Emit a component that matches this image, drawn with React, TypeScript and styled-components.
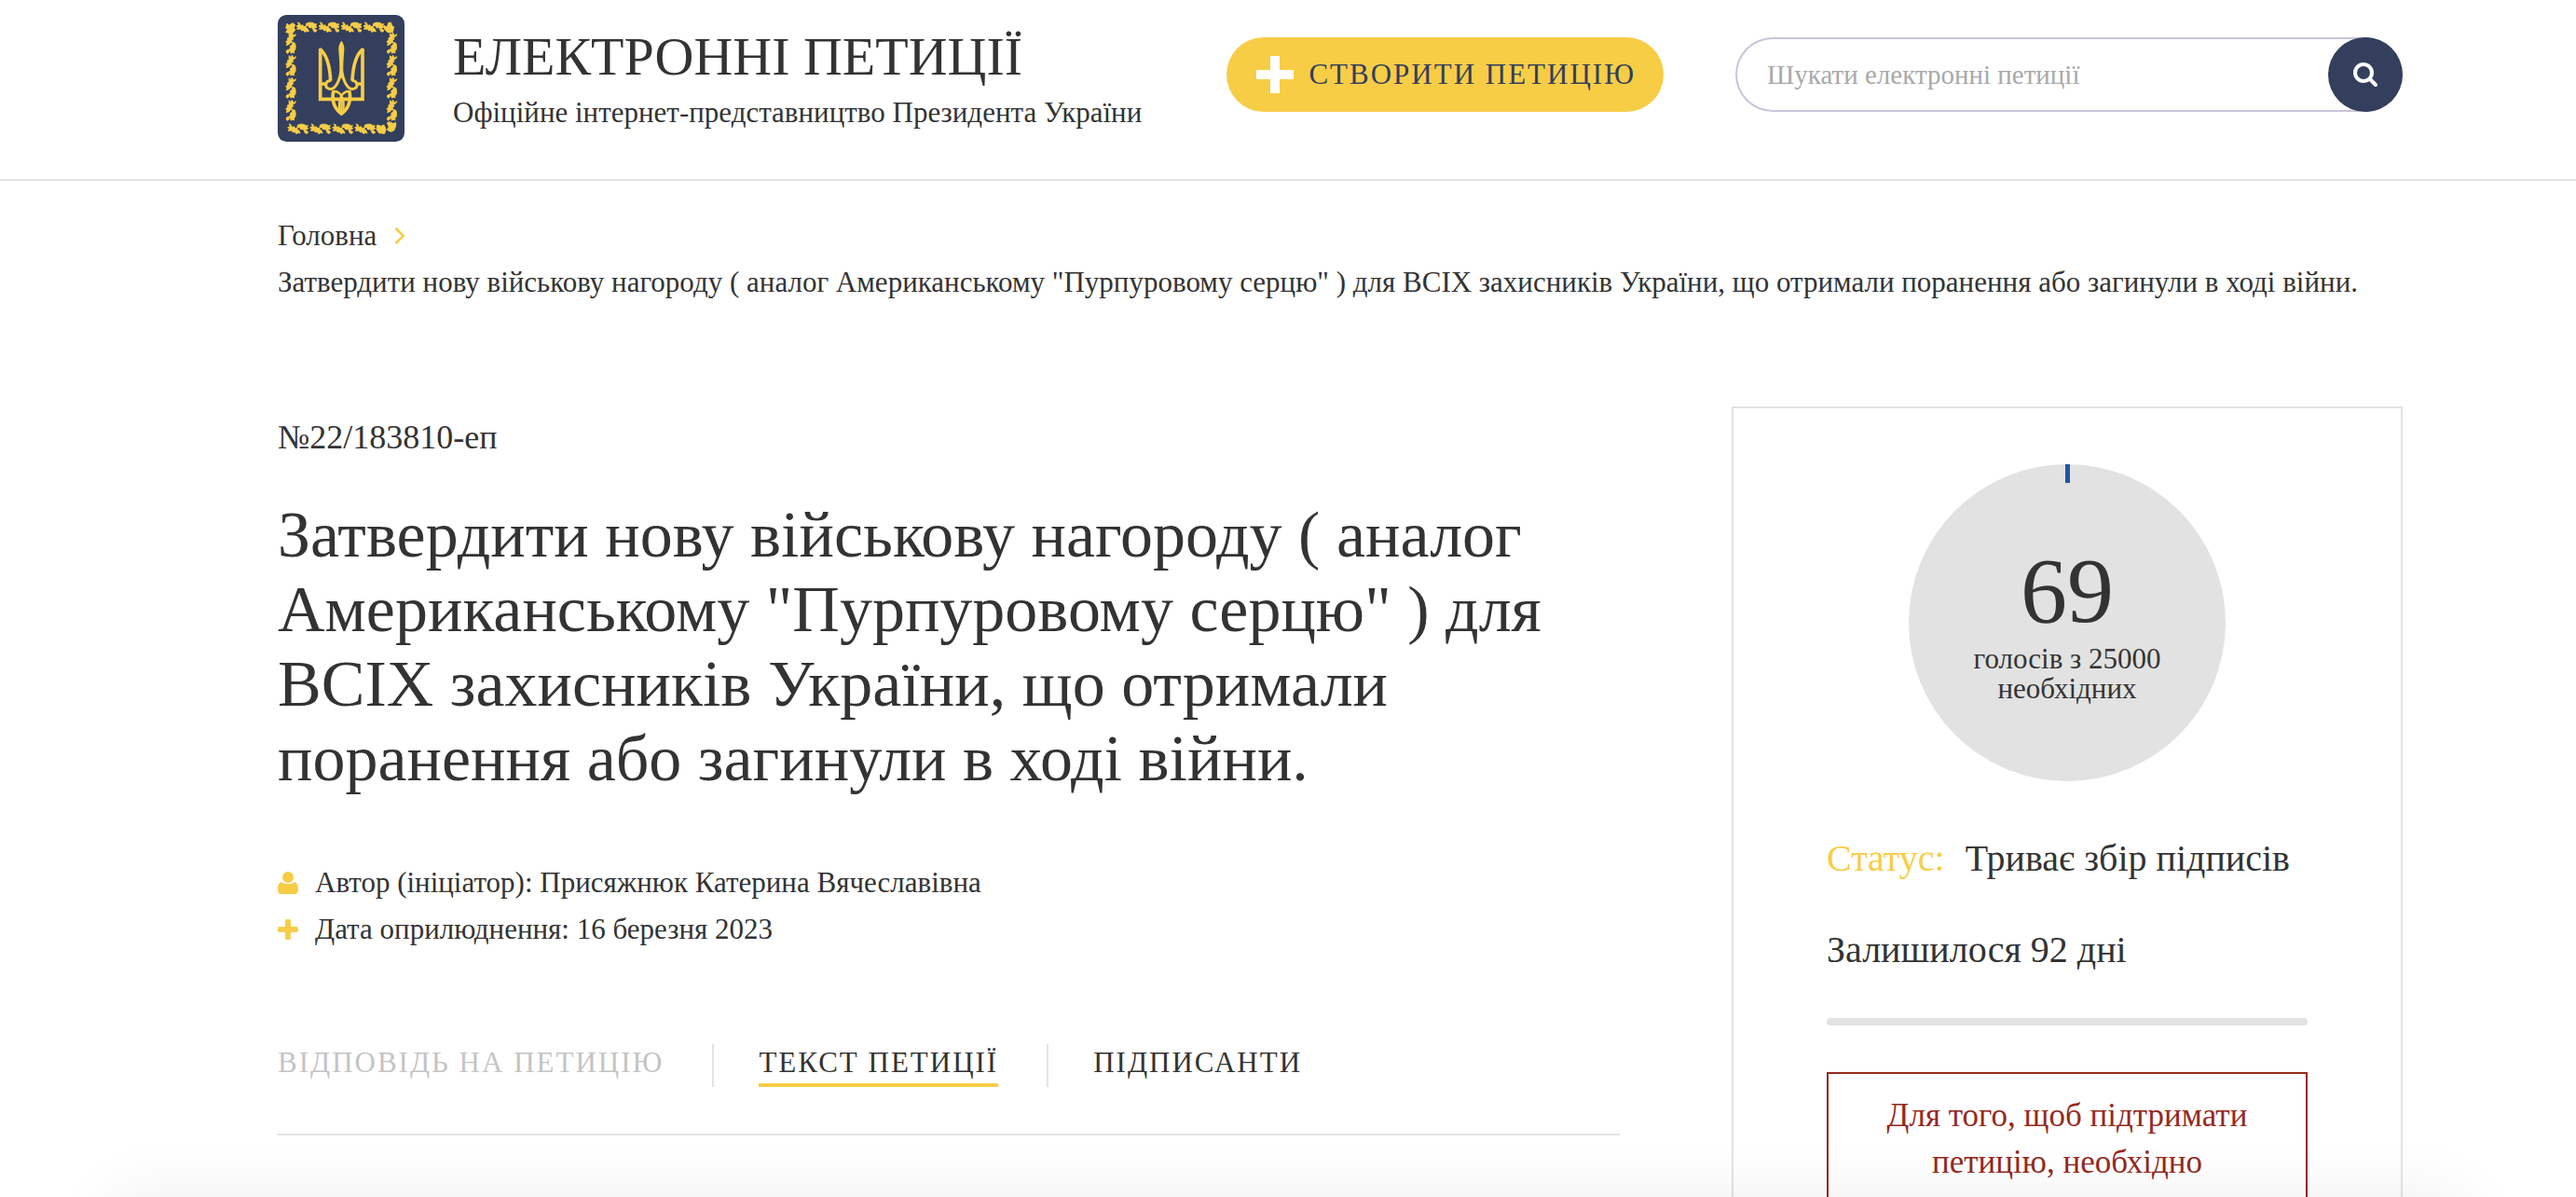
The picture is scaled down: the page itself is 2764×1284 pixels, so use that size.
import React from 'react';
import styled, { createGlobalStyle } from 'styled-components';
import { ChevronRight } from 'lucide-react';

const color = {
  text: '#333333',
  muted: '#c4c4c4',
  line: '#e3e3e3',
  navy: '#333f5d',
  yellow: '#f7cd46',
  red: '#942a1e',
};

const GlobalStyle = createGlobalStyle`
  *, *::before, *::after { box-sizing: border-box; }
  body {
    margin: 0;
    background: #ffffff;
    color: ${color.text};
    font-family: Georgia, "Liberation Serif", serif;
    font-size: 31px;
    line-height: 50px;
  }
  a { color: inherit; text-decoration: none; }
  button, input { font: inherit; }
`;

const Page = styled.div`
  display: flex;
  flex-direction: column;
  height: 100vh;
  overflow: hidden;
`;

const Header = styled.header`
  display: flex;
  align-items: flex-start;
  padding: 16px 186px 40px 298px;
  border-bottom: 2px solid ${color.line};
`;

const Brand = styled.a`
  display: flex;
  gap: 52px;
`;

const BrandText = styled.div`
  display: flex;
  flex-direction: column;
  gap: 8px;
  padding-top: 13px;
  white-space: nowrap;
`;

const BrandTitle = styled.span`
  font-size: 58px;
  line-height: 64px;
`;

const BrandNote = styled.span`
  line-height: 40px;
`;

const Tools = styled.div`
  display: flex;
  flex: 1;
  justify-content: flex-end;
  gap: 77px;
  padding-top: 24px;
`;

const CreateButton = styled.button`
  display: flex;
  align-items: center;
  gap: 16px;
  height: 80px;
  padding: 0 30px 0 32px;
  border: 0;
  border-radius: 40px;
  background: ${color.yellow};
  color: ${color.navy};
  letter-spacing: 2px;
  white-space: nowrap;
`;

const SearchForm = styled.form`
  display: flex;
  width: 716px;
  height: 80px;
  border-radius: 40px;
  box-shadow: inset 0 0 0 2px #c8c5d8;
`;

const SearchInput = styled.input`
  flex: 1;
  min-width: 0;
  padding: 0 34px;
  border: 0;
  outline: 0;
  background: transparent;
  color: ${color.text};
  font-size: 29px;
  &::placeholder { color: #a9a9a9; opacity: 1; }
`;

const SearchButton = styled.button`
  display: flex;
  align-items: center;
  justify-content: center;
  width: 80px;
  height: 80px;
  padding: 0;
  border: 0;
  border-radius: 50%;
  background: ${color.navy};
`;

const Content = styled.main`
  display: flex;
  flex: 1;
  flex-direction: column;
  gap: 108px;
  padding: 34px 186px 0 298px;
`;

const Breadcrumbs = styled.nav`
  display: flex;
  flex-direction: column;
`;

const Crumb = styled.span`
  display: flex;
  align-items: center;
  gap: 10px;
`;

const Columns = styled.div`
  display: grid;
  flex: 1;
  grid-template-columns: 2fr 1fr;
  gap: 120px;
`;

const Petition = styled.article`
  padding-top: 8px;
`;

const PetitionNumber = styled.div`
  font-size: 36px;
`;

const Title = styled.h1`
  margin: 40px 0 68px;
  font-size: 70px;
  font-weight: 400;
  line-height: 80px;
`;

const Meta = styled.div`
  display: flex;
  align-items: center;
  gap: 18px;
`;

const Tabs = styled.nav`
  display: flex;
  margin-top: 98px;
  padding-bottom: 50px;
  border-bottom: 2px solid ${color.line};
`;

const TabCell = styled.div`
  display: flex;
  & + & {
    margin-left: 52px;
    padding-left: 48px;
    border-left: 2px solid ${color.line};
  }
`;

const Tab = styled.a<{ $active?: boolean; $disabled?: boolean }>`
  padding-bottom: 2px;
  border-bottom: 4px solid ${p => (p.$active ? color.yellow : 'transparent')};
  color: ${p => (p.$disabled ? color.muted : color.text)};
  line-height: 40px;
  letter-spacing: 2px;
`;

const Card = styled.aside`
  display: flex;
  flex-direction: column;
  padding: 60px 100px 0;
  border: 2px solid ${color.line};
  border-bottom: 0;
`;

const Votes = styled.div`
  display: flex;
  flex-direction: column;
  align-items: center;
  align-self: center;
  width: 340px;
  height: 340px;
  border-radius: 50%;
  background: #e2e2e2;
  text-align: center;
`;

const VoteTick = styled.span`
  width: 5px;
  height: 20px;
  background: #2454a0;
`;

const VoteCount = styled.strong`
  margin: 66px 0 7px;
  font-size: 100px;
  font-weight: 400;
  line-height: 100px;
`;

const VoteGoal = styled.span`
  width: 240px;
  line-height: 32px;
`;

const Status = styled.div`
  display: flex;
  gap: 22px;
  margin: 58px 0 48px;
  font-size: 40px;
  white-space: nowrap;
`;

const StatusLabel = styled.span`
  color: ${color.yellow};
`;

const DaysLeft = styled.div`
  font-size: 40px;
`;

const DaysBar = styled.div`
  flex: none;
  height: 8px;
  margin: 48px 0 50px;
  border-radius: 4px;
  background: ${color.line};
`;

const Notice = styled.div`
  flex: 1;
  padding: 20px 50px 0;
  border: 2px solid ${color.red};
  border-bottom: 0;
  color: ${color.red};
  font-size: 35px;
  text-align: center;
`;

const BottomShade = styled.div`
  position: fixed;
  top: 100%;
  right: 120px;
  left: 120px;
  height: 80px;
  box-shadow: 0 0 70px rgba(0, 0, 0, 0.07);
`;

const GARLAND =
  'M4 0L9 7L0 12L7 16L1 21L9 22L14 20L16 26L24 26L28 32L33 28L40 30L36 20L30 17L32 12L24 14L20 8L14 11L10 2Z' +
  'M32 4C38 -1 55 -1 59 6L65 5L62 11L66 15L58 18L54 23L49 16L43 18L38 11L31 10Z' +
  'M54 24L60 21L66 26L62 31L56 29Z';

function Emblem() {
  const steps = [0, 1, 2, 3];
  return (
    <svg width="136" height="136" viewBox="24 18 408 408" role="img" aria-label="Герб України">
      <rect x="24" y="18" width="408" height="408" rx="28" fill={color.navy} />
      <g fill={color.yellow} stroke={color.yellow} strokeWidth="3" strokeLinejoin="round">
        {steps.map(i => (
          <g key={i}>
            <path d={GARLAND} transform={`translate(${84 + i * 72} 42)`} />
            <path d={GARLAND} transform={`translate(${56 + i * 72} 369)`} />
            <path d={GARLAND} transform={`translate(82 ${76 + i * 72}) rotate(90)`} />
            <path d={GARLAND} transform={`translate(407 ${76 + i * 72}) rotate(90)`} />
          </g>
        ))}
        <path d="M54 46L60 52L72 44L80 50L76 60L80 66L66 84L60 76L50 74L56 64L50 60Z" />
        <path d="M366 52L376 58L380 44L388 42L392 54L398 56L394 74L378 74L368 64Z" />
        <path d="M344 372L356 376L366 372L372 386L368 400L350 398L342 386Z" />
        <path d="M376 366L384 362L396 368L404 364L404 376L398 390L388 394L376 388L382 378Z" />
      </g>
      <path
        d="M229 101C222 110 219 119 220 132C223 168 224 192 222 206L229 224L236 206C234 192 235 168 238 132C239 119 236 110 229 101Z"
        fill={color.yellow}
      />
      <g fill="none" stroke={color.yellow} strokeWidth="11">
        <path d="M161 126V289H297V126" />
        <path d="M159 127C183 146 192 184 194 230M299 127C275 146 266 184 264 230" />
        <path d="M196 229C177 230 174 249 187 255C203 262 219 244 227 204M262 229C281 230 284 249 271 255C255 262 239 244 231 204" strokeWidth="9" />
        <path d="M161 240H180M297 240H278" />
        <path d="M204 262C196 292 206 320 229 336C252 320 262 292 254 262" />
        <path d="M203 264C226 262 240 286 235 326M255 264C232 262 218 286 223 326" strokeWidth="7" />
        <path d="M229 288V334" strokeWidth="7" />
      </g>
    </svg>
  );
}

const CreateIcon = () => (
  <svg width="40" height="40" viewBox="0 0 40 40" aria-hidden="true">
    <path d="M15 0H25V15H40V25H25V40H15V25H0V15H15Z" fill="#ffffff" />
  </svg>
);

const SearchIcon = () => (
  <svg width="26" height="26" viewBox="0 0 26 26" fill="none" stroke="#ffffff" aria-hidden="true">
    <circle cx="11" cy="11" r="9" strokeWidth="4" />
    <path d="M18 18L24 24" strokeWidth="4" strokeLinecap="round" />
  </svg>
);

const AuthorIcon = () => (
  <svg width="22" height="24" viewBox="0 0 22 24" fill={color.yellow} aria-hidden="true">
    <circle cx="11" cy="6" r="6" />
    <path d="M4 11C6 14 16 14 18 11C21 12 22 15 22 19C22 22 21 24 18 24H4C1 24 0 22 0 19C0 15 1 12 4 11Z" />
  </svg>
);

const DateIcon = () => (
  <svg width="22" height="22" viewBox="0 0 22 22" fill={color.yellow} aria-hidden="true">
    <rect x="8" width="6" height="22" rx="2" />
    <rect y="8" width="22" height="6" rx="2" />
  </svg>
);

export default function App() {
  return (
    <Page>
      <GlobalStyle />
      <Header>
        <Brand href="#">
          <Emblem />
          <BrandText>
            <BrandTitle>ЕЛЕКТРОННІ ПЕТИЦІЇ</BrandTitle>
            <BrandNote>Офіційне інтернет-представництво Президента України</BrandNote>
          </BrandText>
        </Brand>
        <Tools>
          <CreateButton type="button">
            <CreateIcon />
            СТВОРИТИ ПЕТИЦІЮ
          </CreateButton>
          <SearchForm role="search">
            <SearchInput type="text" aria-label="Шукати електронні петиції" placeholder="Шукати електронні петиції" />
            <SearchButton type="submit" aria-label="Шукати">
              <SearchIcon />
            </SearchButton>
          </SearchForm>
        </Tools>
      </Header>
      <Content>
        <Breadcrumbs>
          <Crumb>
            <a href="#">Головна</a>
            <ChevronRight size={30} color={color.yellow} strokeWidth={2} aria-hidden="true" />
          </Crumb>
          <Crumb>
            Затвердити нову військову нагороду ( аналог Американському "Пурпуровому серцю" ) для ВСІХ захисників
            України, що отримали поранення або загинули в ході війни.
          </Crumb>
        </Breadcrumbs>
        <Columns>
          <Petition>
            <PetitionNumber>№22/183810-еп</PetitionNumber>
            <Title>
              Затвердити нову військову нагороду ( аналог Американському "Пурпуровому серцю" ) для ВСІХ захисників
              України, що отримали поранення або загинули в ході війни.
            </Title>
            <Meta>
              <AuthorIcon />
              Автор (ініціатор): Присяжнюк Катерина Вячеславівна
            </Meta>
            <Meta>
              <DateIcon />
              Дата оприлюднення: 16 березня 2023
            </Meta>
            <Tabs>
              <TabCell>
                <Tab href="#" $disabled>ВІДПОВІДЬ НА ПЕТИЦІЮ</Tab>
              </TabCell>
              <TabCell>
                <Tab href="#" $active>ТЕКСТ ПЕТИЦІЇ</Tab>
              </TabCell>
              <TabCell>
                <Tab href="#">ПІДПИСАНТИ</Tab>
              </TabCell>
            </Tabs>
          </Petition>
          <Card>
            <Votes>
              <VoteTick />
              <VoteCount>69</VoteCount>
              <VoteGoal>голосів з 25000 необхідних</VoteGoal>
            </Votes>
            <Status>
              <StatusLabel>Статус:</StatusLabel>
              <span>Триває збір підписів</span>
            </Status>
            <DaysLeft>Залишилося 92 дні</DaysLeft>
            <DaysBar />
            <Notice>Для того, щоб підтримати петицію, необхідно</Notice>
          </Card>
        </Columns>
      </Content>
      <BottomShade />
    </Page>
  );
}
